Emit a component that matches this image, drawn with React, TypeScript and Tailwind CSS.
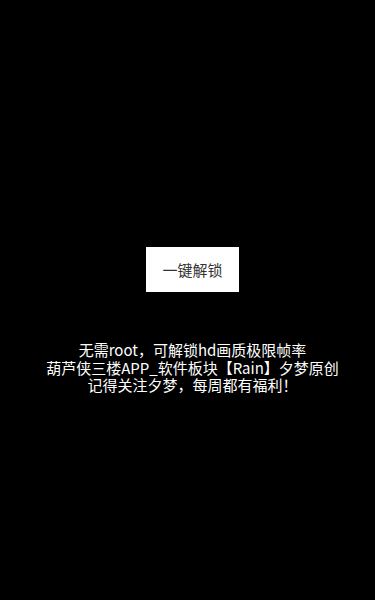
export default function App() {
  return (
    <div
      className="min-h-[600px] bg-black flex flex-col items-center pt-[247px] pl-[10px]"
      style={{ fontFamily: '"Noto Sans CJK SC", "Noto Sans", sans-serif' }}
    >
      <button className="bg-white text-[#333] text-[15px] leading-[45px] h-[45px] w-[93px] text-center">
        一键解锁
      </button>
      <div className="mt-[49px] text-white text-[15px] leading-[17.5px] text-center">
        <p>无需root，可解锁hd画质极限帧率</p>
        <p>葫芦侠三楼APP_软件板块【Rain】夕梦原创</p>
        <p>记得关注夕梦，每周都有福利！</p>
      </div>
    </div>
  )
}
